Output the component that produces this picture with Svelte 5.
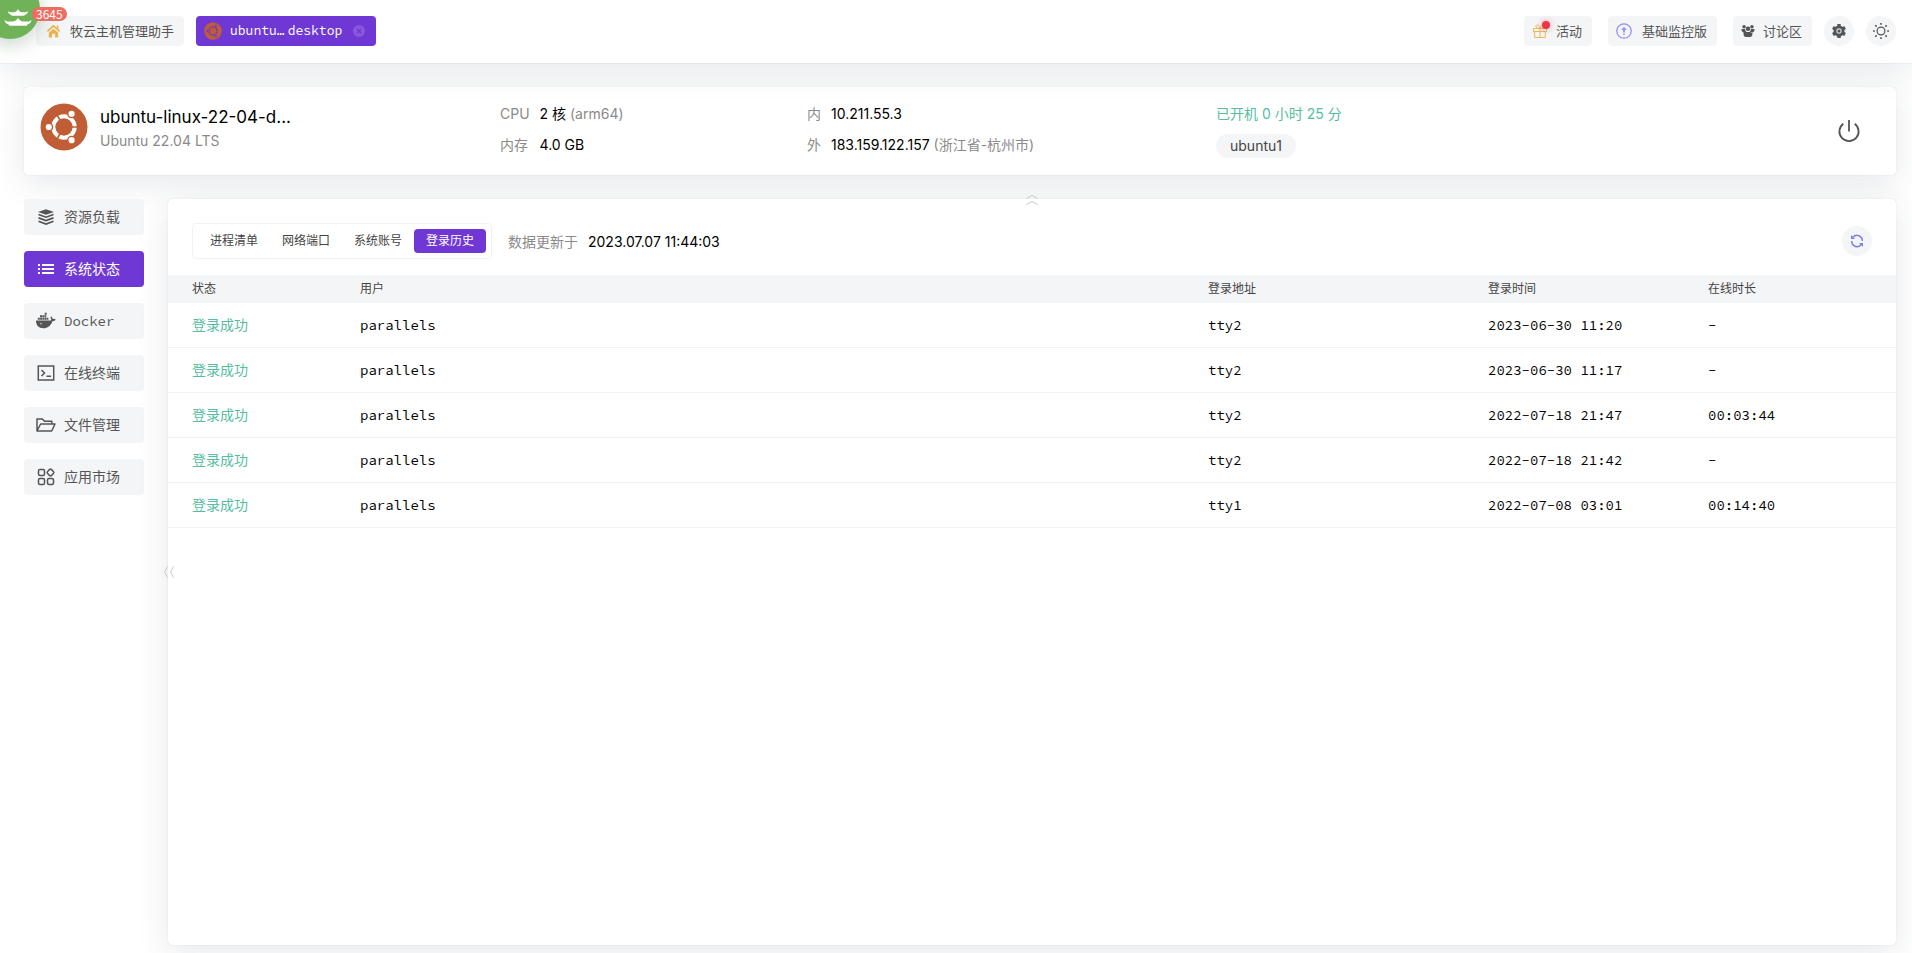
<script lang="ts">
  interface LoginRecord {
    user: string;
    from: string;
    time: string;
    duration: string;
  }

  const menu = [
    { id: 'load', label: '资源负载' },
    { id: 'status', label: '系统状态' },
    { id: 'docker', label: 'Docker' },
    { id: 'terminal', label: '在线终端' },
    { id: 'files', label: '文件管理' },
    { id: 'market', label: '应用市场' }
  ];

  const tabs = ['进程清单', '网络端口', '系统账号', '登录历史'];

  const records: LoginRecord[] = [
    { user: 'parallels', from: 'tty2', time: '2023-06-30 11:20', duration: '-' },
    { user: 'parallels', from: 'tty2', time: '2023-06-30 11:17', duration: '-' },
    { user: 'parallels', from: 'tty2', time: '2022-07-18 21:47', duration: '00:03:44' },
    { user: 'parallels', from: 'tty2', time: '2022-07-18 21:42', duration: '-' },
    { user: 'parallels', from: 'tty1', time: '2022-07-08 03:01', duration: '00:14:40' }
  ];

  let activeMenu = $state('status');
  let activeTab = $state('登录历史');
</script>

{#snippet ubuntu(bg: string, fg: string)}
  <svg viewBox="0 0 48 48" aria-hidden="true">
    <circle cx="24" cy="24" r="23.5" fill={bg} />
    <circle cx="24" cy="24" r="10.6" fill="none" stroke={fg} stroke-width="4.2" />
    <g stroke={bg} stroke-width="1.6">
      <path d="M24 24h15M24 24l-7.5-13M24 24l-7.5 13" />
    </g>
    <circle cx="24" cy="24" r="8.5" fill={bg} />
    <g fill={fg} stroke={bg} stroke-width="1.4">
      <circle cx="8.8" cy="24" r="3.8" />
      <circle cx="31.6" cy="10.8" r="3.8" />
      <circle cx="31.6" cy="37.2" r="3.8" />
    </g>
  </svg>
{/snippet}

{#snippet menuIcon(id: string)}
  <svg class="menu-icon" viewBox="0 0 20 20" fill="none" stroke="currentColor" stroke-width="1.5" aria-hidden="true">
    {#if id === 'load'}
      <path d="M10 2.2 18 5l-8 2.8L2 5z" fill="currentColor" stroke="none" />
      <path d="M2.5 7.5 10 10.200l7.5-2.700M2.5 10.900l7.5 2.700 7.500-2.700M2.500 14.300l7.500 2.700 7.500-2.700" stroke-width="1.700" />
    {:else if id === 'status'}
      <path d="M2 6h2M2 10h2M2 14h2M6 6h12M6 10h12M6 14h12" stroke-width="1.8" />
    {:else if id === 'docker'}
      <path d="M0 9.500h15c.3-1.200 0-2.300-.6-3.200l.8-.9c.9.7 1.300 1.600 1.400 2.500 1.200-.2 2.300 0 3.200.6-.6 1.200-1.800 1.700-3.400 1.700C14.800 15 11.600 17.200 7.300 17.200 2.800 17.200 0 14.600 0 9.500z" fill="currentColor" stroke="none" />
      <path d="M1.800 7.700h10.600M4 5.200h6.300M8.700 2.800h2" stroke-width="2" stroke-dasharray="2 .3" />
      <circle cx="5" cy="12.700" r=".7" fill="#f4f5f7" stroke="none" />
    {:else if id === 'terminal'}
      <path d="M2.300 3h15.400v14H2.300zM5.500 7l3 3-3 3M10.500 13.300h4.500" />
    {:else if id === 'files'}
      <path d="M1 16V4h5.500l2 2.300h7.300V9M1 16l3.600-7H19l-3.300 7z" stroke-linejoin="round" />
    {:else}
      <rect x="2.500" y="2.500" width="6" height="6" rx="1.500" />
      <rect x="2.500" y="11.500" width="6" height="6" rx="1.500" />
      <rect x="11.500" y="11.500" width="6" height="6" rx="1.500" />
      <rect x="11.700" y="2.700" width="5.600" height="5.600" rx="1.500" transform="rotate(45 14.500 5.500)" />
    {/if}
  </svg>
{/snippet}

<div class="page">
  <header class="topbar">
    <a class="float-logo" href="#messages" aria-label="消息">
      <!-- two stacked pagoda roofs -->
      <svg viewBox="0 0 60 60" aria-hidden="true">
        <g fill="#fff">
          <path d="M38 30c.8 2 2 3 4 3.200h3.500c1.300 0 2-.5 2.800-1.200-.3 1.800-1.500 3.200-3.300 3.700l-.8 1H31.800l-.8-1c-1.800-.5-3-1.900-3.300-3.700.8.7 1.500 1.200 2.800 1.200H34c2-.2 3.200-1.200 4-3.200z" />
          <path d="M38 38.800c1 2.200 2.500 3.400 5 3.700h4.500c1.800 0 3-.6 4-1.500-.3 2-1.600 3.700-3.800 4.300l-1 1.400H29.300l-1-1.400c-2.200-.6-3.500-2.300-3.800-4.300 1 .9 2.200 1.500 4 1.500H33c2.500-.3 4-1.500 5-3.700z" />
        </g>
      </svg>
      <span class="float-count">3645</span>
    </a>

    <nav class="host-tabs">
      <a class="chip home" href="#home">
        <svg viewBox="0 0 16 16" aria-hidden="true">
          <path d="M1.500 8.300 8 2.500l6.500 5.800" fill="none" stroke="#eab54a" stroke-width="1.800" />
          <path d="M8 5.500l5 4.400v5H9.700v-3.900H6.300v3.900H3v-5zM11.500 2h1.700v4l-1.700-1.500z" fill="#eab54a" />
        </svg>
        牧云主机管理助手
      </a>
      <div class="chip host">
        {@render ubuntu('#c05d35', '#6f38d4')}
        <a href="#host"><span>ubuntu…</span><span>desktop</span></a>
        <button class="close" aria-label="关闭">
          <svg viewBox="0 0 12 12" aria-hidden="true">
            <circle cx="6" cy="6" r="6" fill="#8857dc" />
            <path d="M4 4l4 4M8 4l-4 4" stroke="#6f38d4" stroke-width="1.400" />
          </svg>
        </button>
      </div>
    </nav>

    <div class="tools">
      <button class="chip gift">
        <svg viewBox="0 0 16 16" fill="none" stroke="#ebb95c" aria-hidden="true">
          <path d="M1.500 5.500h13v3h-13zM2.700 8.500h10.600v6H2.700zM8 5.500v9M8 5.500C5 5.500 4 4.500 4 3.300 4 1 7.500 1.300 8 5.500c.5-4.200 4-4.500 4-2.200 0 1.200-1 2.200-4 2.200z" />
        </svg>
        活动
      </button>
      <button class="chip edition">
        <svg viewBox="0 0 16 16" fill="none" stroke="#9292ee" aria-hidden="true">
          <circle cx="8" cy="8" r="7.200" stroke-width="1.300" />
          <path d="M8 5v4.500M8 10.700v1.300" stroke-width="1.800" />
          <path d="M5.300 7 8 3.800 10.700 7z" fill="#9292ee" stroke="none" />
        </svg>
        基础监控版
      </button>
      <button class="chip forum">
        <svg viewBox="0 0 16 16" fill="currentColor" aria-hidden="true">
          <circle cx="3.500" cy="3.200" r="2" />
          <circle cx="12.500" cy="3.200" r="2" />
          <circle cx="8" cy="5.500" r="2.600" />
          <path d="M.5 5.800h4.200c0 1.600.6 2.500 1.500 3.100L3.300 10C1.500 9.500.5 8.300.5 5.800zM15.500 5.800h-4.200c0 1.600-.6 2.500-1.500 3.100l2.900 1.100c1.800-.5 2.800-1.700 2.800-4.200zM3 9h10v3c0 1.700-1 2.800-2.700 2.800H5.700C4 14.800 3 13.700 3 12z" />
        </svg>
        讨论区
      </button>
      <button class="round" aria-label="设置">
        <svg viewBox="0 0 16 16" aria-hidden="true">
          <circle cx="8" cy="8" r="5.500" fill="currentColor" />
          <path d="M8 1v14M1.900 4.500l12.200 7M1.900 11.500l12.200-7" stroke="currentColor" stroke-width="3.400" />
          <circle cx="8" cy="8" r="2.100" fill="currentColor" stroke="#d3d4d6" stroke-width="1.200" />
        </svg>
      </button>
      <button class="round" aria-label="主题">
        <svg viewBox="0 0 16 16" fill="none" stroke="currentColor" stroke-width="1.200" aria-hidden="true">
          <circle cx="8" cy="8" r="3.900" />
          <path d="M8 0v1.800M8 14.200V16M0 8h1.800M14.200 8H16M2.300 2.300l1.300 1.300M12.400 12.400l1.300 1.300M2.300 13.700l1.300-1.300M12.400 3.600l1.300-1.300" stroke-width="1.600" />
        </svg>
      </button>
    </div>
  </header>

  <section class="card summary">
    <div class="identity">
      {@render ubuntu('#c05d35', '#fff')}
      <div>
        <h1>ubuntu-linux-22-04-d...</h1>
        <p>Ubuntu 22.04 LTS</p>
      </div>
    </div>
    <dl class="spec">
      <dt>CPU</dt>
      <dd>2 核 <span>(arm64)</span></dd>
      <dt>内存</dt>
      <dd>4.0 GB</dd>
    </dl>
    <dl class="spec">
      <dt>内</dt>
      <dd>10.211.55.3</dd>
      <dt>外</dt>
      <dd>183.159.122.157 <span>(浙江省-杭州市)</span></dd>
    </dl>
    <div class="uptime">
      <p>已开机 0 小时 25 分</p>
      <span class="tag">ubuntu1</span>
    </div>
    <button class="power" aria-label="电源">
      <svg viewBox="0 0 24 24" fill="none" stroke="currentColor" stroke-width="1.800" aria-hidden="true">
        <path d="M12 1v11.500M6.300 4.800a9.600 9.600 0 1 0 11.400 0" />
      </svg>
    </button>
  </section>

  <div class="body">
    <nav class="sidebar">
      {#each menu as item}
        <button class:active={activeMenu === item.id} onclick={() => (activeMenu = item.id)}>
          {@render menuIcon(item.id)}
          <span class:mono={item.id === 'docker'}>{item.label}</span>
        </button>
      {/each}
    </nav>

    <main class="card panel">
      <button class="fold fold-up" aria-label="收起顶部">
        <svg viewBox="0 0 12 12" fill="none" stroke="#c9c9c9" aria-hidden="true">
          <path d="M.5 4.500 6 1.500l5.500 3M.5 10.500 6 7.500l5.500 3" />
        </svg>
      </button>
      <button class="fold fold-left" aria-label="收起侧栏">
        <svg viewBox="0 0 12 12" fill="none" stroke="#c9c9c9" aria-hidden="true">
          <path d="M4.500.5l-3 5.500 3 5.500M10.500.5l-3 5.500 3 5.500" />
        </svg>
      </button>

      <div class="toolbar">
        <div class="tabs">
          {#each tabs as tab}
            <button class:active={activeTab === tab} onclick={() => (activeTab = tab)}>{tab}</button>
          {/each}
        </div>
        <p class="updated">数据更新于 <time>2023.07.07 11:44:03</time></p>
        <button class="round refresh" aria-label="刷新">
          <svg viewBox="0 0 14 14" fill="none" stroke="currentColor" stroke-width="1.500" aria-hidden="true">
            <path d="M3 3.200A5.300 5.300 0 0 1 12.300 7M1.700 7A5.300 5.300 0 0 0 11 10.800" />
            <path d="M1 1v4h4zM13 13V9H9z" fill="currentColor" stroke="none" />
          </svg>
        </button>
      </div>

      <table>
        <thead>
          <tr>
            <th class="col-status">状态</th>
            <th>用户</th>
            <th class="col-from">登录地址</th>
            <th class="col-time">登录时间</th>
            <th class="col-duration">在线时长</th>
          </tr>
        </thead>
        <tbody>
          {#each records as record}
            <tr>
              <td class="success">登录成功</td>
              <td>{record.user}</td>
              <td>{record.from}</td>
              <td>{record.time}</td>
              <td>{record.duration}</td>
            </tr>
          {/each}
        </tbody>
      </table>
    </main>
  </div>
</div>

<style>
  :global(body) {
    background: #fff;
  }

  .page {
    --purple: #6f38d4;
    --gray-bg: #f4f5f7;
    --green: #55bda0;
    --mono: 'Source Code Pro', 'Liberation Mono', 'Noto Sans CJK SC', monospace;
    --shadow: 0 0 1px rgba(0, 0, 0, 0.2), 0 8px 32px rgba(48, 64, 80, 0.12);
    display: flex;
    flex-direction: column;
    gap: 24px;
    min-height: 100vh;
    padding-bottom: 8px;
    box-sizing: border-box;
    overflow: hidden;
    color: #000;
    font: 14px/20px Inter, 'Noto Sans CJK SC', sans-serif;
  }

  h1,
  p,
  dl,
  dd {
    margin: 0;
  }

  button {
    padding: 0;
    border: none;
    background: none;
    color: #555;
    font: inherit;
    cursor: pointer;
  }

  a {
    color: inherit;
    text-decoration: none;
  }

  svg {
    display: block;
    flex: none;
  }

  .topbar {
    position: relative;
    display: flex;
    align-items: center;
    justify-content: space-between;
    height: 63px;
    padding: 0 16px 0 36px;
    background: #fff;
    box-shadow: var(--shadow);
  }

  .float-logo {
    position: absolute;
    top: -21px;
    left: -20px;
    width: 60px;
    height: 60px;
    border-radius: 50%;
    background: #6fb257;
    box-shadow: 0 4px 20px rgba(60, 100, 60, 0.3);
    z-index: 1;
  }

  .float-count {
    position: absolute;
    top: 28px;
    left: 52px;
    padding: 0 4px;
    border-radius: 7px;
    background: #ed6d62;
    color: #fff;
    font: 12px/14px 'Noto Sans CJK SC', sans-serif;
  }

  .host-tabs,
  .tools {
    display: flex;
    align-items: center;
    gap: 12px;
    padding-bottom: 1px;
  }

  .chip {
    display: flex;
    align-items: center;
    height: 30px;
    border-radius: 4px;
    background: var(--gray-bg);
    color: #555;
    font-size: 13px;
  }

  .chip svg {
    width: 16px;
    height: 16px;
  }

  .home {
    gap: 9px;
    padding: 0 10px;
  }

  .home svg {
    width: 15px;
  }

  .host {
    gap: 8px;
    padding: 0 11px 0 8px;
    background: var(--purple);
    color: #fff;
    font-family: var(--mono);
  }

  .host > :global(svg) {
    width: 18px;
    height: 18px;
  }

  .host a {
    display: flex;
    gap: 3px;
    margin-right: 3px;
  }

  .close svg {
    width: 12px;
    height: 12px;
  }

  .tools .chip {
    gap: 8px;
    padding: 0 10px 0 8px;
    margin-right: 4px;
  }

  .tools .edition {
    gap: 10px;
  }

  .tools .forum {
    margin-right: 0;
  }

  .forum svg {
    width: 14px;
    height: 14px;
  }

  .gift {
    position: relative;
  }

  .gift::after {
    content: '';
    position: absolute;
    top: 5px;
    left: 18px;
    width: 8px;
    height: 8px;
    border-radius: 50%;
    background: #ee3548;
    box-shadow: 0 0 6px rgba(238, 53, 72, 0.5);
  }

  .round {
    display: grid;
    place-items: center;
    width: 30px;
    height: 30px;
    border-radius: 50%;
    background: var(--gray-bg);
  }

  .round svg {
    width: 16px;
    height: 16px;
  }

  .card {
    border-radius: 4px;
    background: #fff;
    box-shadow: var(--shadow);
  }

  .summary {
    display: grid;
    grid-template-columns: 460fr 307fr 409fr 621fr auto;
    margin: 0 16px 0 24px;
    padding: 16px 35px 16px 16px;
  }

  .identity {
    display: flex;
    gap: 12px;
    height: 56px;
  }

  .identity > :global(svg) {
    width: 48px;
    height: 48px;
  }

  h1 {
    padding-top: 2px;
    font-size: 17px;
    font-weight: 400;
    line-height: 24px;
  }

  .identity p,
  dt,
  .spec span {
    color: #8a8a8a;
  }

  .identity p {
    padding-top: 2px;
  }

  .spec {
    display: grid;
    grid-template-columns: max-content 1fr;
    grid-auto-rows: 20px;
    gap: 11px 10px;
    padding-top: 1px;
  }

  .spec dd {
    white-space: nowrap;
  }

  .uptime {
    padding-top: 1px;
  }

  .uptime p {
    color: var(--green);
  }

  .tag {
    display: inline-block;
    margin-top: 10px;
    padding: 0 14px;
    border-radius: 12px;
    background: var(--gray-bg);
    color: #444;
    line-height: 24px;
  }

  .power {
    align-self: center;
  }

  .power svg {
    width: 24px;
    height: 24px;
  }

  .body {
    display: flex;
    flex: 1;
    gap: 24px;
    padding: 0 16px 0 24px;
  }

  .sidebar {
    display: flex;
    flex-direction: column;
    gap: 16px;
    width: 120px;
  }

  .sidebar button {
    display: flex;
    align-items: center;
    gap: 8px;
    height: 36px;
    padding: 0 12px;
    border-radius: 4px;
    background: var(--gray-bg);
  }

  .menu-icon {
    width: 20px;
    height: 20px;
  }

  .sidebar button.active,
  .tabs button.active {
    background: var(--purple);
    color: #fff;
  }

  .mono {
    font-family: var(--mono);
  }

  .panel {
    position: relative;
    flex: 1;
  }

  .fold {
    position: absolute;
  }

  .fold svg {
    width: 12px;
    height: 12px;
  }

  .fold-up {
    top: -5px;
    left: 50%;
    transform: translateX(-50%);
  }

  .fold-left {
    top: 50%;
    left: -5px;
    transform: translateY(-50%);
  }

  .toolbar {
    display: flex;
    align-items: center;
    gap: 16px;
    padding: 24px 24px 16px;
  }

  .tabs {
    display: flex;
    padding: 5px;
    border: 1px solid #f1f2f4;
    border-radius: 4px;
  }

  .tabs button {
    height: 24px;
    padding: 0 12px;
    border-radius: 4px;
    color: #444;
    font-size: 12px;
  }

  .updated {
    padding-top: 2px;
    color: #8a8a8a;
  }

  .updated time {
    margin-left: 6px;
    color: #000;
  }

  .refresh {
    margin-left: auto;
    color: #8080e8;
  }

  .refresh svg {
    width: 14px;
    height: 14px;
  }

  table {
    width: 100%;
    border-collapse: collapse;
    table-layout: fixed;
  }

  th,
  td {
    padding: 0 24px;
    text-align: left;
  }

  th {
    height: 28px;
    background: var(--gray-bg);
    color: #444;
    font-size: 12px;
    font-weight: 400;
  }

  td {
    height: 44px;
    border-bottom: 1px solid #f1f2f4;
    font-family: var(--mono);
    white-space: nowrap;
  }

  .success {
    color: var(--green);
  }

  .col-status {
    width: 120px;
  }

  .col-from {
    width: 232px;
  }

  .col-time {
    width: 172px;
  }

  .col-duration {
    width: 164px;
  }
</style>
